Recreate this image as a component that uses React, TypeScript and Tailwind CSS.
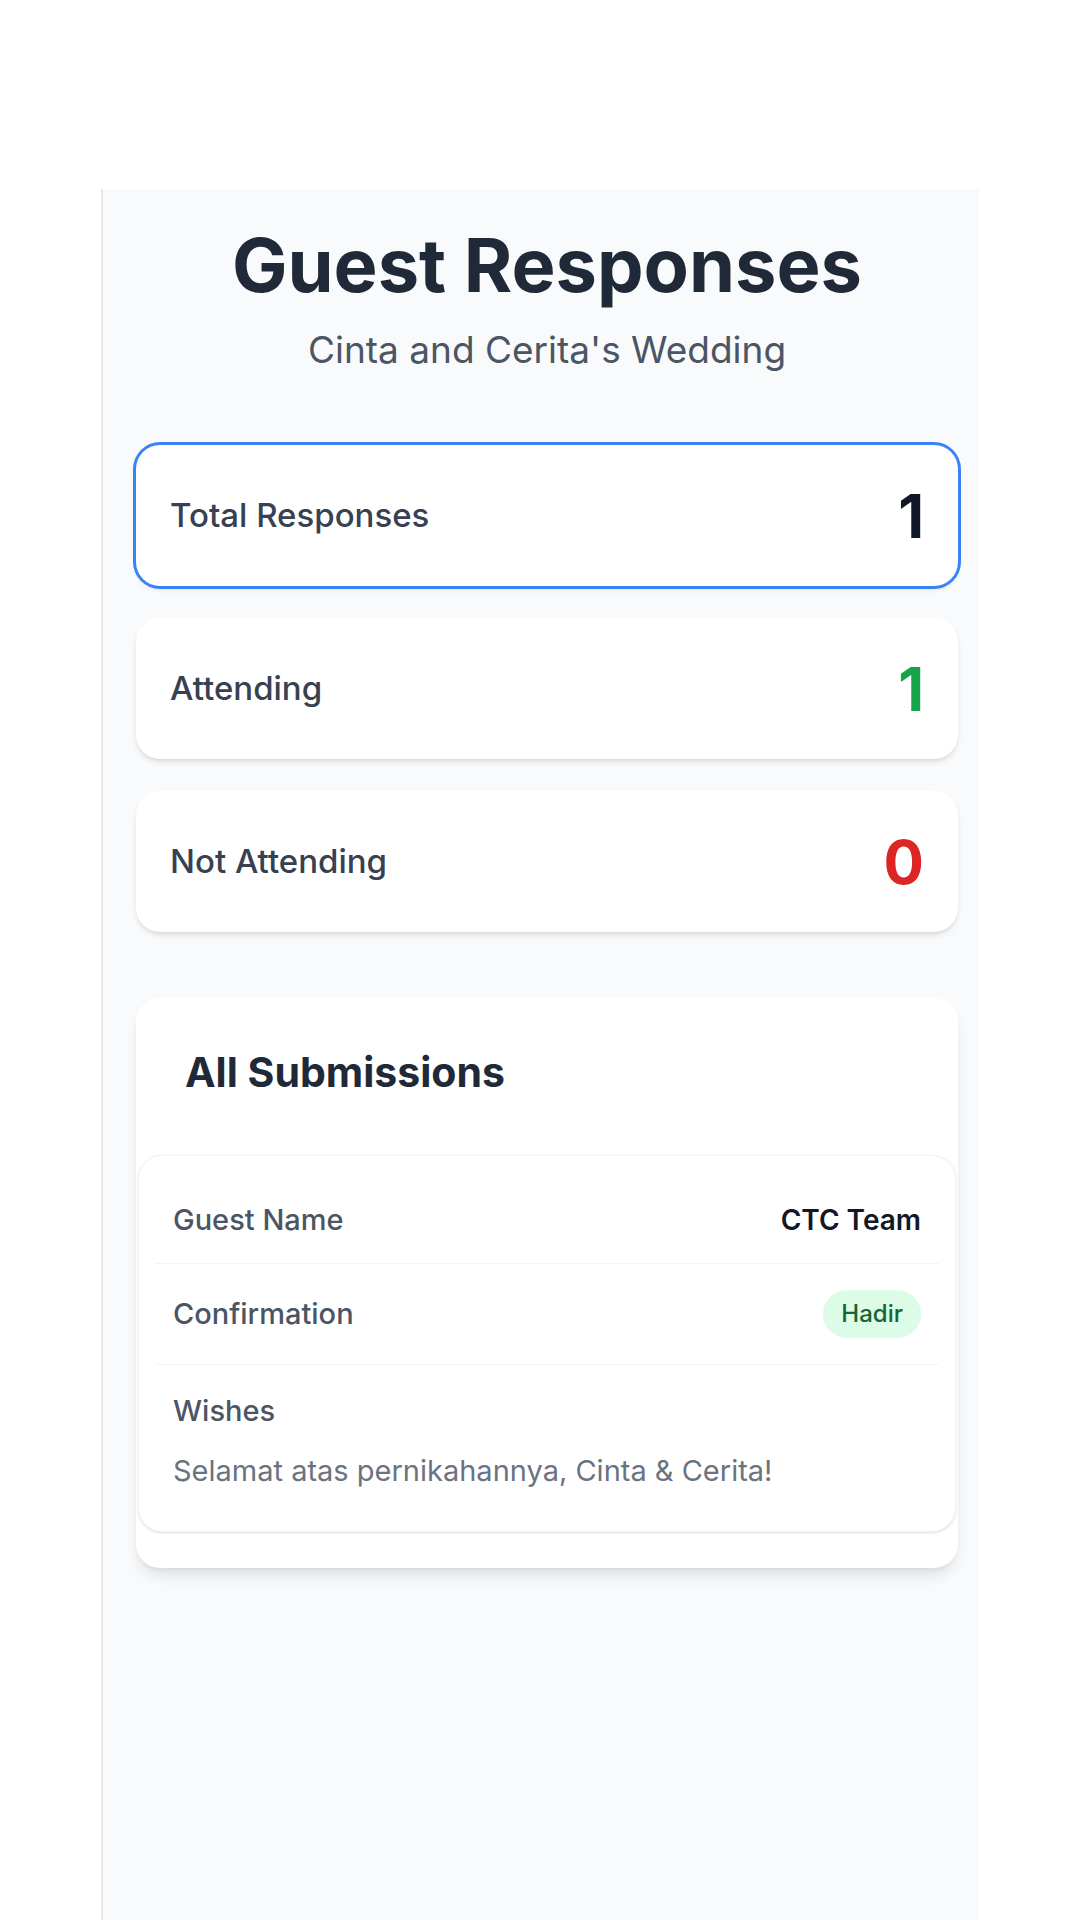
import React from "react";

const stats = [
  { label: "Total Responses", value: "1", color: "text-[#111827]", active: true },
  { label: "Attending", value: "1", color: "text-[#16a34a]", active: false },
  { label: "Not Attending", value: "0", color: "text-[#dc2626]", active: false },
];

export default function App() {
  return (
    <div
      className="min-h-[1920px] w-[1080px] bg-white pt-[189px]"
      style={{ fontFamily: "Inter, 'Noto Sans', sans-serif" }}
    >
      <div className="ml-[101px] min-h-[1731px] w-[878px] border-l-2 border-[#e5e7eb] bg-[#f9fafb] pb-10 pl-[33px] pr-[21px] pt-[39px]">
        <h1 className="text-center text-[74px] font-bold leading-none text-[#1f2937]">
          Guest Responses
        </h1>
        <p className="mt-[28px] text-center text-[37px] leading-[40px] text-[#4b5563]">
          Cinta and Cerita's Wedding
        </p>

        <div className="mt-[75px] flex flex-col gap-[32px]">
          {stats.map((s) => (
            <div
              key={s.label}
              className={
                s.active
                  ? "flex h-[141px] items-center justify-between rounded-3xl bg-white pl-[34px] pr-[34px] shadow-md ring-[3px] ring-[#3b82f6]"
                  : "flex h-[141px] items-center justify-between rounded-3xl bg-white pl-[34px] pr-[34px] shadow-md"
              }
            >
              <span className="text-[33px] font-medium text-[#374151]">{s.label}</span>
              <span className={`text-[60px] font-bold leading-none ${s.color}`}>{s.value}</span>
            </div>
          ))}
        </div>

        <div className="mt-[66px] rounded-3xl bg-white px-[2px] pb-[36px] pt-[54px] shadow-lg">
          <h2 className="pl-[47px] text-[41px] font-bold leading-none text-[#1f2937]">
            All Submissions
          </h2>
          <div className="mt-[62px] rounded-3xl border border-[#f3f4f6] bg-white px-4 pb-[40px] pt-2 shadow-sm">
            <div className="flex h-[100px] items-center justify-between border-b border-[#f3f4f6] px-[18px] pt-[12px]">
              <span className="text-[29px] font-medium text-[#4b5563]">Guest Name</span>
              <span className="text-[28px] font-semibold text-[#111827]">CTC Team</span>
            </div>
            <div className="flex h-[101px] items-center justify-between border-b border-[#f3f4f6] px-[18px]">
              <span className="text-[29px] font-medium text-[#4b5563]">Confirmation</span>
              <span className="flex h-[48px] items-center rounded-full bg-[#dcfce7] px-[18px] text-[24px] font-medium text-[#166534]">
                Hadir
              </span>
            </div>
            <div className="px-[18px] pt-[26px]">
              <div className="text-[29px] font-medium leading-[40px] text-[#4b5563]">Wishes</div>
              <div className="mt-[20px] text-[29px] leading-[40px] text-[#6b7280]">
                Selamat atas pernikahannya, Cinta &amp; Cerita!
              </div>
            </div>
          </div>
        </div>
      </div>
    </div>
  );
}
